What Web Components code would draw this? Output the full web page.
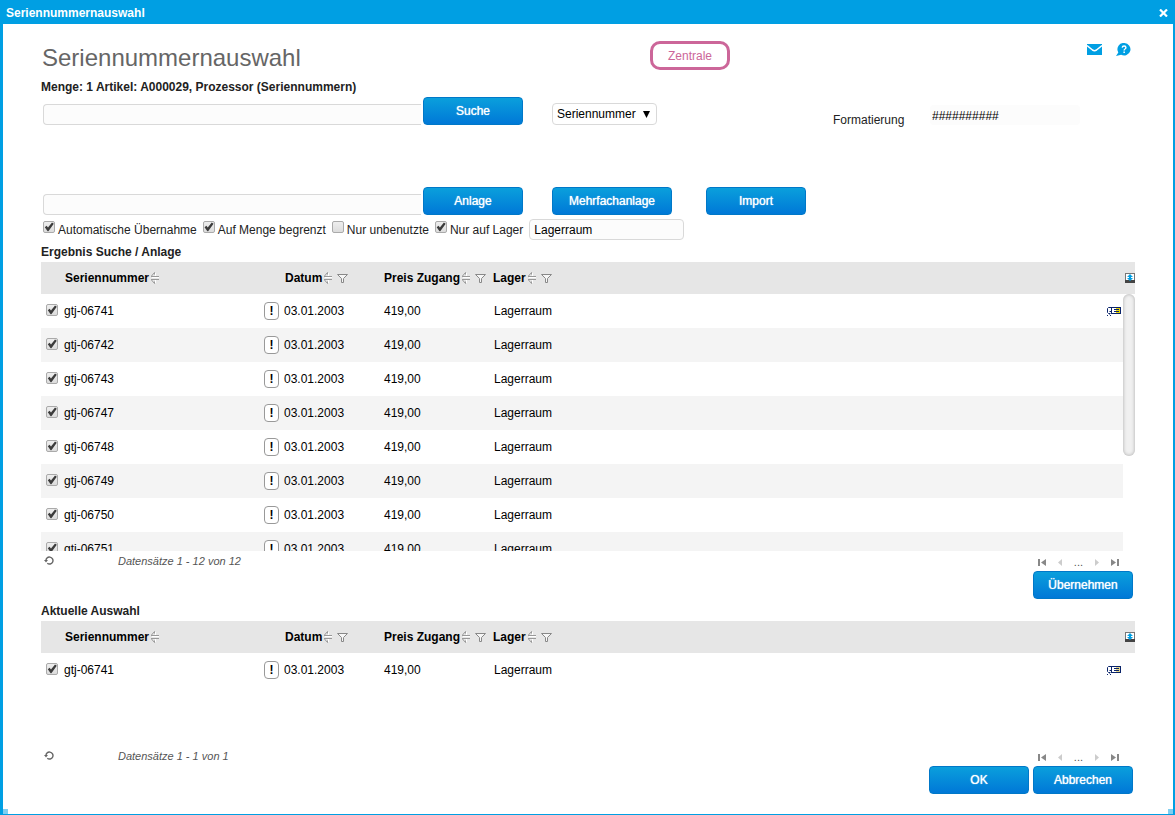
<!DOCTYPE html>
<html lang="de">
<head>
<meta charset="utf-8">
<title>Seriennummernauswahl</title>
<style>
body {
    margin: 0;
    font-family: "Liberation Sans", Arial, sans-serif;
    font-size: 12px;
    line-height: 16px;
    color: #222;
}
</style>
</head>
<body>
<serial-dialog></serial-dialog>

<script>
const icons = {
    sort: `<svg width="8" height="12" viewBox="0 0 8 12" fill="none">
        <path d="M1 5.500h7M4.500 1v3M4.500 8v3" stroke="#fff"/>
        <path d="M.5 4 3.500.5v2M0 4.500h8M0 7.500h8M.5 8l3 3.500v-2" stroke="#999"/></svg>`,
    filter: `<svg width="11" height="9" viewBox="0 0 11 9" fill="#f6f6f6" stroke="#888">
        <path d="M.5.5h10L6.500 4.500v4h-2v-4z"/></svg>`,
    mail: `<svg width="15" height="11" viewBox="0 0 15 11">
        <path fill="#009fe3" d="M0 0h15v11H0z"/>
        <path fill="none" stroke="#fff" stroke-width="1.500" d="M0 1.500 5.500 6q2 1.300 4 0L15 1.500"/></svg>`,
    help: `<svg width="15" height="13" viewBox="0 0 15 13">
        <path fill="#009fe3" d="M8.500 0a6.300 6.300 0 1 1-3.400 11.800L0 13l2.300-3.600A6.300 6.300 0 0 1 8.500 0z"/>
        <path fill="none" stroke="#fff" stroke-width="1.400" d="M6.200 4.700q.2-1.700 1.900-1.700 1.800 0 1.800 1.600 0 .9-.9 1.400-.9.500-.9 1.500"/>
        <path fill="#fff" d="M7.400 8.500h1.500V10H7.400z"/></svg>`,
    close: `<svg width="9" height="8" viewBox="0 0 9 8" fill="none" stroke="#fff" stroke-width="2.200">
        <path d="M1 .5l7 7M8 .5l-7 7"/></svg>`,
    expand: `<svg width="10" height="10" viewBox="0 0 10 10">
        <path fill="#fff" d="M0 0h10v8H0z"/>
        <path fill="#777" d="M0 0h10v1H0zM0 0h1v8H0zM9 0h1v8H9z"/>
        <path fill="#444" d="M0 7h10v3H0z"/>
        <path fill="#009fe3" d="M5 1l3 3H6v1h2L5 8 2 5h2V4H2z"/></svg>`,
    detail: `<svg width="14" height="9" viewBox="0 0 14 9">
        <path fill="#0a246a" d="M4 0h10v7H4z"/>
        <path fill="#fff" d="M5 1h4v5H5z"/>
        <path fill="var(--tag, #e8d400)" d="M9 1h4v5H9z"/>
        <path fill="#0a246a" d="M7 2h5v1H7zM7 4h5v1H7z"/>
        <path fill="none" stroke="#0a246a" d="M4 .5H1.500L.5 1.500v4l1 1h2M4.500 4.500h-2M2.500 6.500v1M4 8.500H3M0 8.500h1"/></svg>`,
    reload: `<svg width="10" height="9" viewBox="0 0 10 9">
        <path fill="none" stroke="#666" stroke-width="1.400" d="M2 5a3.500 3.500 0 1 1 1.300 2.300"/>
        <path fill="#666" d="M0 4h4L2 6.500z"/></svg>`,
    first: `<svg width="8" height="7" viewBox="0 0 8 7" fill="#888"><path d="M0 0h2v7H0zM8 0v7L3 3.500z"/></svg>`,
    prev: `<svg width="4" height="7" viewBox="0 0 4 7" fill="#ccc"><path d="M4 0v7L0 3.500z"/></svg>`,
    next: `<svg width="4" height="7" viewBox="0 0 4 7" fill="#ccc"><path d="M0 0v7l4-3.500z"/></svg>`,
    last: `<svg width="8" height="7" viewBox="0 0 8 7" fill="#888"><path d="M6 0h2v7H6zM0 0v7l5-3.500z"/></svg>`
};

const baseStyle = `
* {
    box-sizing: border-box;
}
svg {
    display: block;
}
.icon {
    border: 0;
    padding: 0;
    background: none;
    color: inherit;
    font: inherit;
    cursor: pointer;
}
input[type=checkbox] {
    appearance: none;
    flex: none;
    display: block;
    width: 12px;
    height: 12px;
    margin: 0;
    border: 1px solid #aaa;
    border-radius: 2px;
    background: linear-gradient(#eee, #dcdcdc);
}
input[type=checkbox]:checked::before {
    content: "";
    display: block;
    width: 10px;
    height: 10px;
    background: #3c3c3c;
    clip-path: polygon(8% 52%, 26% 38%, 40% 56%, 80% 4%, 98% 18%, 44% 92%, 36% 92%);
}`;

class WindowFrame extends HTMLElement {
    constructor() {
        super();
        this.shadowDOM = this.attachShadow({mode: "open"});
    }

    connectedCallback() {
        this.shadowDOM.innerHTML = `
        <style>
        ${baseStyle}
        :host {
            box-sizing: border-box;
            display: flex;
            flex-direction: column;
            position: relative;
            min-height: 100vh;
            border: solid #009fe3;
            border-width: 0 2px 1px 3px;
            background: #fff;
        }
        header {
            display: flex;
            align-items: center;
            justify-content: space-between;
            height: 24px;
            padding: 2px 5px 0 3px;
            background: #009fe3;
            color: #fff;
            font-weight: bold;
        }
        .grip {
            position: absolute;
            bottom: 0;
            width: 5px;
            height: 5px;
            background: #80cff1;
        }
        .left {
            left: 0;
        }
        .right {
            right: 0;
        }
        </style>
        <header>
            <span>${this.getAttribute("caption")}</span>
            <button class="icon" aria-label="Schließen">${icons.close}</button>
        </header>
        <slot></slot>
        <i class="grip left"></i>
        <i class="grip right"></i>`;
    }
}

class ActionButton extends HTMLElement {
    constructor() {
        super();
        this.shadowDOM = this.attachShadow({mode: "open"});
        this.shadowDOM.innerHTML = `
        <style>
        :host {
            display: block;
            width: 100px;
        }
        :host([wide]) {
            width: 120px;
        }
        button {
            display: block;
            width: 100%;
            height: 28px;
            padding: 0;
            border: 1px solid #0078c8;
            border-radius: 4px;
            background: linear-gradient(#0a9fdc, #0078d7);
            color: #fff;
            font: 12px/16px "Liberation Sans", Arial, sans-serif;
            text-shadow: 0 0 1px #fff;
            cursor: pointer;
        }
        button:hover {
            background: #0078d7;
        }
        </style>
        <button type="button"><slot></slot></button>`;
    }
}

class CheckField extends HTMLElement {
    constructor() {
        super();
        this.shadowDOM = this.attachShadow({mode: "open"});
    }

    connectedCallback() {
        this.shadowDOM.innerHTML = `
        <style>
        ${baseStyle}
        :host {
            display: block;
        }
        label {
            display: flex;
            align-items: flex-start;
            gap: 3px;
            white-space: nowrap;
        }
        span {
            padding-top: 1px;
        }
        </style>
        <label>
            <input type="checkbox" ${this.hasAttribute("checked") ? "checked" : ""}>
            <span><slot></slot></span>
        </label>`;
    }
}

class SerialTable extends HTMLElement {
    constructor() {
        super();
        this.shadowDOM = this.attachShadow({mode: "open"});
    }

    set items(items) {
        this._items = items;
        this.render();
    }

    render() {
        const count = this.getAttribute("count");
        this.shadowDOM.innerHTML = `
        <style>
        ${baseStyle}
        :host {
            display: block;
            position: relative;
        }
        .scroller {
            height: 125px;
            overflow: auto;
            scrollbar-width: none;
        }
        :host([scrolling]) .scroller {
            height: 289px;
        }
        table {
            width: 100%;
            table-layout: fixed;
            border-collapse: collapse;
            color: #000;
        }
        .check {
            width: 23px;
        }
        .serial {
            width: 200px;
        }
        .flag {
            width: 20px;
        }
        .date {
            width: 100px;
        }
        .price {
            width: 109px;
        }
        .action {
            width: 16px;
        }
        .edge {
            width: 12px;
        }
        th, td {
            padding: 0;
            text-align: left;
            white-space: nowrap;
        }
        th {
            position: sticky;
            top: 0;
            z-index: 1;
            height: 32px;
            background: #e6e6e6;
        }
        th > div {
            display: flex;
            align-items: center;
            gap: 5px;
        }
        th:nth-child(-n+4) > div {
            padding-left: 1px;
        }
        th span {
            display: flex;
            align-items: center;
            gap: 2px;
        }
        th:last-child svg {
            margin-left: 2px;
        }
        td {
            height: 34px;
        }
        td:nth-child(6) {
            padding-left: 1px;
        }
        tbody tr:nth-child(even) td:not(:last-child) {
            background: #f4f4f4;
        }
        td input[type=checkbox] {
            margin: 0 0 2px 5px;
        }
        .info {
            display: block;
            width: 15px;
            height: 18px;
            padding: 0;
            border: 1px solid #999;
            border-radius: 4px;
            background: #fff;
            color: #000;
            font: bold 12px/16px "Liberation Sans", Arial, sans-serif;
        }
        td .icon {
            display: block;
        }
        .thumb {
            position: absolute;
            z-index: 2;
            top: 32px;
            right: 0;
            width: 12px;
            height: 162px;
            border-radius: 6px;
            background: #f0f0f0;
            box-shadow: inset 0 0 3px 1px #c4c4c4;
        }
        :host(:not([scrolling])) .thumb {
            display: none;
        }
        :host(:not([scrolling])) {
            --tag: #e5d78a;
        }
        footer {
            display: grid;
            grid-template-columns: 74px 1fr auto;
            align-items: center;
            height: 20px;
            padding: 0 16px 0 3px;
            color: #555;
            font-size: 11px;
            font-style: italic;
        }
        nav {
            display: flex;
            align-items: center;
            gap: 12px;
            padding-top: 2px;
            font-style: normal;
        }
        </style>
        <div class="scroller">
            <table>
                <colgroup>
                    <col class="check"><col class="serial"><col class="flag"><col class="date">
                    <col class="price"><col><col class="action"><col class="edge">
                </colgroup>
                <thead>
                    <tr>
                        <th></th>
                        <th>${this.heading("Seriennummer", false)}</th>
                        <th></th>
                        <th>${this.heading("Datum", true)}</th>
                        <th>${this.heading("Preis Zugang", true)}</th>
                        <th>${this.heading("Lager", true)}</th>
                        <th></th>
                        <th>${icons.expand}</th>
                    </tr>
                </thead>
                <tbody>${this._items.map((item, index) => this.row(item, index)).join("")}</tbody>
            </table>
        </div>
        <i class="thumb"></i>
        <footer>
            <div><button class="icon" aria-label="Aktualisieren">${icons.reload}</button></div>
            <span>Datensätze 1 - ${count} von ${count}</span>
            <nav>
                <button class="icon" aria-label="Erste Seite">${icons.first}</button>
                <button class="icon" aria-label="Vorherige Seite">${icons.prev}</button>
                <span>...</span>
                <button class="icon" aria-label="Nächste Seite">${icons.next}</button>
                <button class="icon" aria-label="Letzte Seite">${icons.last}</button>
            </nav>
        </footer>`;
    }

    heading(text, filter) {
        return `<div><span>${text} ${icons.sort}</span>${filter ? icons.filter : ""}</div>`;
    }

    row(item, index) {
        return `
        <tr>
            <td><input type="checkbox" aria-label="${item}" checked></td>
            <td>${item}</td>
            <td><button class="info">!</button></td>
            <td>03.01.2003</td>
            <td>419,00</td>
            <td>Lagerraum</td>
            <td>${index === 0 ? `<button class="icon" aria-label="Details">${icons.detail}</button>` : ""}</td>
            <td></td>
        </tr>`;
    }
}

class SerialDialog extends HTMLElement {
    constructor() {
        super();
        this.shadowDOM = this.attachShadow({mode: "open"});
    }

    connectedCallback() {
        this.shadowDOM.innerHTML = `
        <style>
        ${baseStyle}
        :host {
            display: block;
        }
        main {
            padding: 16px 38px 20px;
        }
        h1, h2 {
            margin: 0;
            font-weight: bold;
            font-size: 12px;
            line-height: 20px;
        }
        h1 {
            padding-left: 1px;
            color: #666;
            font-weight: normal;
            font-size: 24px;
            line-height: 36px;
        }
        .top {
            display: grid;
            grid-template-columns: 609px 1fr auto;
            align-items: start;
            height: 38px;
        }
        .top + h2 {
            line-height: 19px;
        }
        .place {
            width: 80px;
            height: 29px;
            margin-top: 1px;
            border: 3px solid #cc6699;
            border-radius: 10px;
            color: #cc6699;
            line-height: 24px;
            text-align: center;
        }
        .tools {
            display: flex;
            align-items: center;
            gap: 14px;
            padding: 3px 4px 0 0;
        }
        .fields {
            display: grid;
            grid-template-columns: 382px 129px 154px 127px 97px 1fr;
            align-items: end;
            height: 28px;
        }
        .fields + .fields {
            margin: 62px 0 4px;
        }
        input[type=text], select {
            height: 21px;
            border: 1px solid #d9d9d9;
            border-radius: 4px;
            background: #fcfcfc;
            color: #000;
            font: inherit;
        }
        input.query {
            width: 378px;
            margin-left: 2px;
            border-right: 0;
            border-radius: 4px 0 0 4px;
        }
        .choice {
            position: relative;
            width: 105px;
            height: 22px;
        }
        .choice::after {
            content: "";
            position: absolute;
            top: 8px;
            right: 7px;
            width: 7px;
            height: 7px;
            background: #000;
            clip-path: polygon(0 0, 100% 0, 50% 100%);
            pointer-events: none;
        }
        select {
            display: block;
            appearance: none;
            width: 100%;
            height: 22px;
            padding: 0 4px;
            background: #fff;
        }
        .fields label {
            line-height: 10px;
        }
        input.format {
            width: 150px;
            height: 20px;
            padding: 2px 2px 0;
            border: 0;
        }
        .options {
            display: flex;
            gap: 6px;
            height: 23px;
            padding-left: 2px;
        }
        .options check-field {
            padding-top: 2px;
        }
        .options input {
            width: 155px;
            padding: 0 4px;
        }
        .buttons {
            display: flex;
            justify-content: flex-end;
            gap: 4px;
            padding-right: 2px;
        }
        .buttons + h2 {
            padding-top: 2px;
        }
        </style>
        <window-frame caption="Seriennummernauswahl">
            <main>
                <div class="top">
                    <h1>Seriennummernauswahl</h1>
                    <div class="place">Zentrale</div>
                    <div class="tools">
                        <button class="icon" aria-label="Nachricht">${icons.mail}</button>
                        <button class="icon" aria-label="Hilfe">${icons.help}</button>
                    </div>
                </div>
                <h2>Menge: 1 Artikel: A000029, Prozessor (Seriennummern)</h2>
                <div class="fields">
                    <input class="query" type="text" aria-label="Suche">
                    <action-button>Suche</action-button>
                    <div class="choice">
                        <select aria-label="Suchfeld"><option>Seriennummer</option></select>
                    </div>
                    <i></i>
                    <label for="format">Formatierung</label>
                    <input class="format" id="format" type="text" value="##########">
                </div>
                <div class="fields">
                    <input class="query" type="text" aria-label="Anlage">
                    <action-button>Anlage</action-button>
                    <action-button wide>Mehrfachanlage</action-button>
                    <action-button>Import</action-button>
                </div>
                <div class="options">
                    <check-field checked>Automatische Übernahme</check-field>
                    <check-field checked>Auf Menge begrenzt</check-field>
                    <check-field>Nur unbenutzte</check-field>
                    <check-field checked>Nur auf Lager</check-field>
                    <input type="text" aria-label="Lager" value="Lagerraum">
                </div>
                <h2>Ergebnis Suche / Anlage</h2>
                <serial-table id="results" count="12" scrolling></serial-table>
                <div class="buttons"><action-button>Übernehmen</action-button></div>
                <h2>Aktuelle Auswahl</h2>
                <serial-table id="selection" count="1"></serial-table>
                <div class="buttons">
                    <action-button>OK</action-button>
                    <action-button>Abbrechen</action-button>
                </div>
            </main>
        </window-frame>`;

        const serials = ["06741", "06742", "06743", "06747", "06748", "06749", "06750", "06751"]
            .map(number => `gtj-${number}`);
        this.shadowDOM.querySelector("#results").items = serials;
        this.shadowDOM.querySelector("#selection").items = serials.slice(0, 1);
    }
}

customElements.define("window-frame", WindowFrame);
customElements.define("action-button", ActionButton);
customElements.define("check-field", CheckField);
customElements.define("serial-table", SerialTable);
customElements.define("serial-dialog", SerialDialog);
</script>
</body>
</html>
